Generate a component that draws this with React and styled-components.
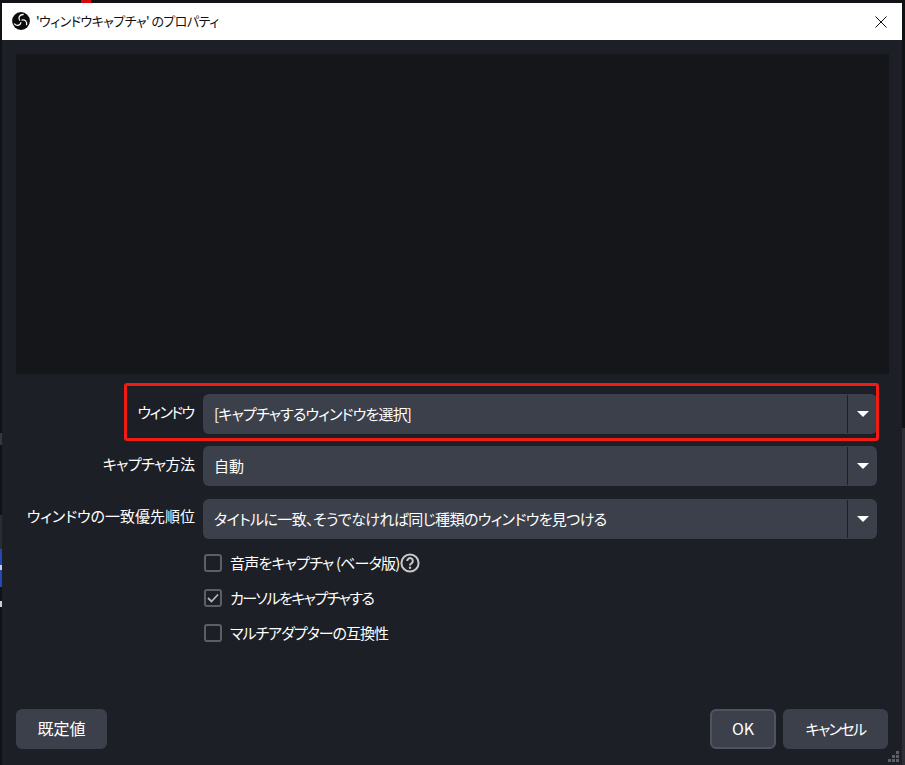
import styled, { createGlobalStyle } from 'styled-components'

const GlobalStyle = createGlobalStyle`
    html, body {
        margin: 0;
        height: 100%;
        background: #111216;
        overflow: hidden;
    }
    * {
        box-sizing: border-box;
    }
`
const Page = styled.div`
    position: relative;
    width: 905px;
    height: 765px;
    padding: 3px 3px 0 2px;
    font-family: "Noto Sans CJK JP", "Noto Sans", sans-serif;
    font-feature-settings: "palt";
    color: #fff;
`
const EdgeMark = styled.div`
    position: absolute;
    left: ${(p) => p.$x}px;
    top: ${(p) => p.$y}px;
    width: ${(p) => p.$w}px;
    height: ${(p) => p.$h}px;
    background: ${(p) => p.$color};
`
const Window = styled.div`
    position: relative;
    display: flex;
    flex-direction: column;
    height: 762px;
    background: #1d1f26;
`
const TitleBar = styled.div`
    display: flex;
    align-items: center;
    flex: none;
    height: 37px;
    padding: 0 15px 0 10px;
    background: #fff;
    color: #111;
    font-size: 13px;
`
const Logo = styled.svg`
    width: 18px;
    height: 18px;
    margin-top: -1px;
`
const TitleText = styled.span`
    flex: 1;
    margin: -3px 0 0 6px;
    letter-spacing: -0.55px;
`
const Body = styled.div`
    display: flex;
    flex-direction: column;
    flex: 1;
    padding: 14px 13px 16px 14px;
`
const Preview = styled.div`
    height: 320px;
    flex: none;
    background: #14161a;
`
const Form = styled.div`
    display: grid;
    grid-template-columns: 179px 1fr;
    column-gap: 8px;
    row-gap: 12px;
    margin: 20px 12px 0 0;
`
const Label = styled.div`
    align-self: center;
    margin-top: -6px;
    padding-right: ${(p) => -p.$track}px;
    text-align: right;
    font-size: 15px;
    letter-spacing: ${(p) => p.$track}px;
    white-space: nowrap;
`
const Combo = styled.div`
    display: flex;
    align-items: center;
    height: 40px;
    margin-top: ${(p) => (p.$nudge ? '1px' : '0')};
    border-radius: 6px;
    background: #3c404b;
    font-size: 15px;
`
const ComboText = styled.span`
    flex: 1;
    margin-top: -2px;
    padding-left: 11px;
    letter-spacing: ${(p) => p.$track}px;
`
const ComboArrow = styled.div`
    display: flex;
    align-items: center;
    justify-content: center;
    width: 30px;
    height: 38px;
    border-left: 1px solid #1d1f26;
`
const Caret = styled.div`
    width: 0;
    height: 0;
    border-left: 6px solid transparent;
    border-right: 6px solid transparent;
    border-top: 6px solid #fff;
`
const Checks = styled.div`
    grid-column: 2;
    display: flex;
    flex-direction: column;
    gap: 17px;
    margin: 3px 0 0 1px;
`
const CheckRow = styled.div`
    display: flex;
    align-items: center;
    height: 18px;
    font-size: 15px;
`
const CheckBox = styled.div`
    display: flex;
    align-items: center;
    justify-content: center;
    width: 18px;
    height: 18px;
    margin-right: 8px;
    border: 2px solid #5c5f68;
    border-radius: 3px;
`
const CheckLabel = styled.span`
    margin-top: -2px;
    letter-spacing: ${(p) => p.$track}px;
`
const HelpIcon = styled.svg`
    width: 20px;
    height: 20px;
    margin-left: 1px;
`
const Footer = styled.div`
    display: flex;
    gap: 7px;
    margin: auto 1px 0 0;
`
const Button = styled.div`
    display: flex;
    align-items: center;
    justify-content: center;
    width: ${(p) => p.$width}px;
    height: 40px;
    margin-right: ${(p) => (p.$spread ? 'auto' : '0')};
    padding-bottom: 2px;
    border: 2px solid ${(p) => (p.$primary ? '#4f535f' : '#3c404b')};
    border-radius: 6px;
    background: #3c404b;
    font-size: ${(p) => p.$size || 15}px;
    letter-spacing: ${(p) => p.$track || 0}px;
`
const Marker = styled.div`
    position: absolute;
    left: 122px;
    top: 380px;
    width: 755px;
    height: 58px;
    border: 3px solid #f01c14;
    border-radius: 3px;
`
const Grip = styled.svg`
    position: absolute;
    right: 2px;
    bottom: 2px;
    width: 12px;
    height: 12px;
`

const ObsLogo = () => (
    <Logo viewBox="0 0 19 19">
        <circle cx="9.5" cy="9.5" r="9.4" fill="#0b0b0b" />
        <g fill="none" stroke="#f4f4f4" strokeWidth="1.4" strokeLinecap="round">
            <path d="M8 8.6C6.3 6.2 8 2.6 11.8 2.6" />
            <path d="M10.6 8.6C13.4 7.6 16.2 10 15.4 13.4" />
            <path d="M9.4 11.2C8.8 14 5 15.4 2.6 12.6" />
        </g>
    </Logo>
)

const CloseIcon = () => (
    <svg width="12" height="12" viewBox="0 0 12 12">
        <path d="M.5.5l11 11M11.5.5l-11 11" stroke="#111" strokeWidth="1" fill="none" />
    </svg>
)

const edgeMarks = [
    { x: 81, y: 0, w: 10, h: 3, color: '#d40a0a' },
    { x: 0, y: 433, w: 2, h: 12, color: '#33373f' },
    { x: 0, y: 515, w: 2, h: 34, color: '#2a2c35' },
    { x: 0, y: 549, w: 2, h: 38, color: '#2747b5' },
    { x: 0, y: 565, w: 2, h: 5, color: '#c9cede' },
    { x: 0, y: 601, w: 2, h: 6, color: '#c9cede' },
    { x: 902, y: 428, w: 3, h: 337, color: '#2d2e36' },
]

const rows = [
    { label: 'ウィンドウ', labelTrack: -1.6, value: '[キャプチャするウィンドウを選択]', valueTrack: -0.8 },
    { label: 'キャプチャ方法', labelTrack: -0.6, value: '自動', valueTrack: 0 },
    { label: 'ウィンドウの一致優先順位', labelTrack: 0, value: 'タイトルに一致、そうでなければ同じ種類のウィンドウを見つける', valueTrack: -0.6, nudge: true },
]

const App = () => {
    return (
        <Page>
            <GlobalStyle />
            {edgeMarks.map((m) => (
                <EdgeMark key={`${m.x}-${m.y}`} $x={m.x} $y={m.y} $w={m.w} $h={m.h} $color={m.color} />
            ))}
            <Window>
                <TitleBar>
                    <ObsLogo />
                    <TitleText>'ウィンドウキャプチャ' のプロパティ</TitleText>
                    <CloseIcon />
                </TitleBar>
                <Body>
                    <Preview />
                    <Form>
                        {rows.map((row) => (
                            <div key={row.label} style={{ display: 'contents' }}>
                                <Label $track={row.labelTrack}>{row.label}</Label>
                                <Combo $nudge={row.nudge}>
                                    <ComboText $track={row.valueTrack}>{row.value}</ComboText>
                                    <ComboArrow><Caret /></ComboArrow>
                                </Combo>
                            </div>
                        ))}
                        <Checks>
                            <CheckRow>
                                <CheckBox />
                                <CheckLabel $track={-0.8}>音声をキャプチャ (ベータ版)</CheckLabel>
                                <HelpIcon viewBox="0 0 20 20">
                                    <circle cx="10" cy="10" r="8.6" fill="none" stroke="#c9c9cc" strokeWidth="2" />
                                    <path d="M7.2 8a2.8 2.8 0 1 1 4.3 2.3c-1 .6-1.5 1-1.5 2.1" fill="none" stroke="#c9c9cc" strokeWidth="2" />
                                    <circle cx="10" cy="14.8" r="1.2" fill="#c9c9cc" />
                                </HelpIcon>
                            </CheckRow>
                            <CheckRow>
                                <CheckBox>
                                    <svg width="12" height="10" viewBox="0 0 12 10">
                                        <path d="M1 5l3.5 3.5L11 1.5" fill="none" stroke="#b5b6ba" strokeWidth="1.8" />
                                    </svg>
                                </CheckBox>
                                <CheckLabel $track={-1.55}>カーソルをキャプチャする</CheckLabel>
                            </CheckRow>
                            <CheckRow>
                                <CheckBox />
                                <CheckLabel $track={-1}>マルチアダプターの互換性</CheckLabel>
                            </CheckRow>
                        </Checks>
                    </Form>
                    <Footer>
                        <Button $width={91} $size={16} $spread>既定値</Button>
                        <Button $width={66} $size={16} $primary>OK</Button>
                        <Button $width={105} $track={-1.6}>キャンセル</Button>
                    </Footer>
                </Body>
                <Marker />
                <Grip viewBox="0 0 12 12" fill="#5d606a">
                    <rect x="8" y="0" width="3" height="3" />
                    <rect x="4" y="4" width="3" height="3" />
                    <rect x="8" y="4" width="3" height="3" />
                    <rect x="0" y="8" width="3" height="3" />
                    <rect x="4" y="8" width="3" height="3" />
                    <rect x="8" y="8" width="3" height="3" />
                </Grip>
            </Window>
        </Page>
    )
}

export default App
